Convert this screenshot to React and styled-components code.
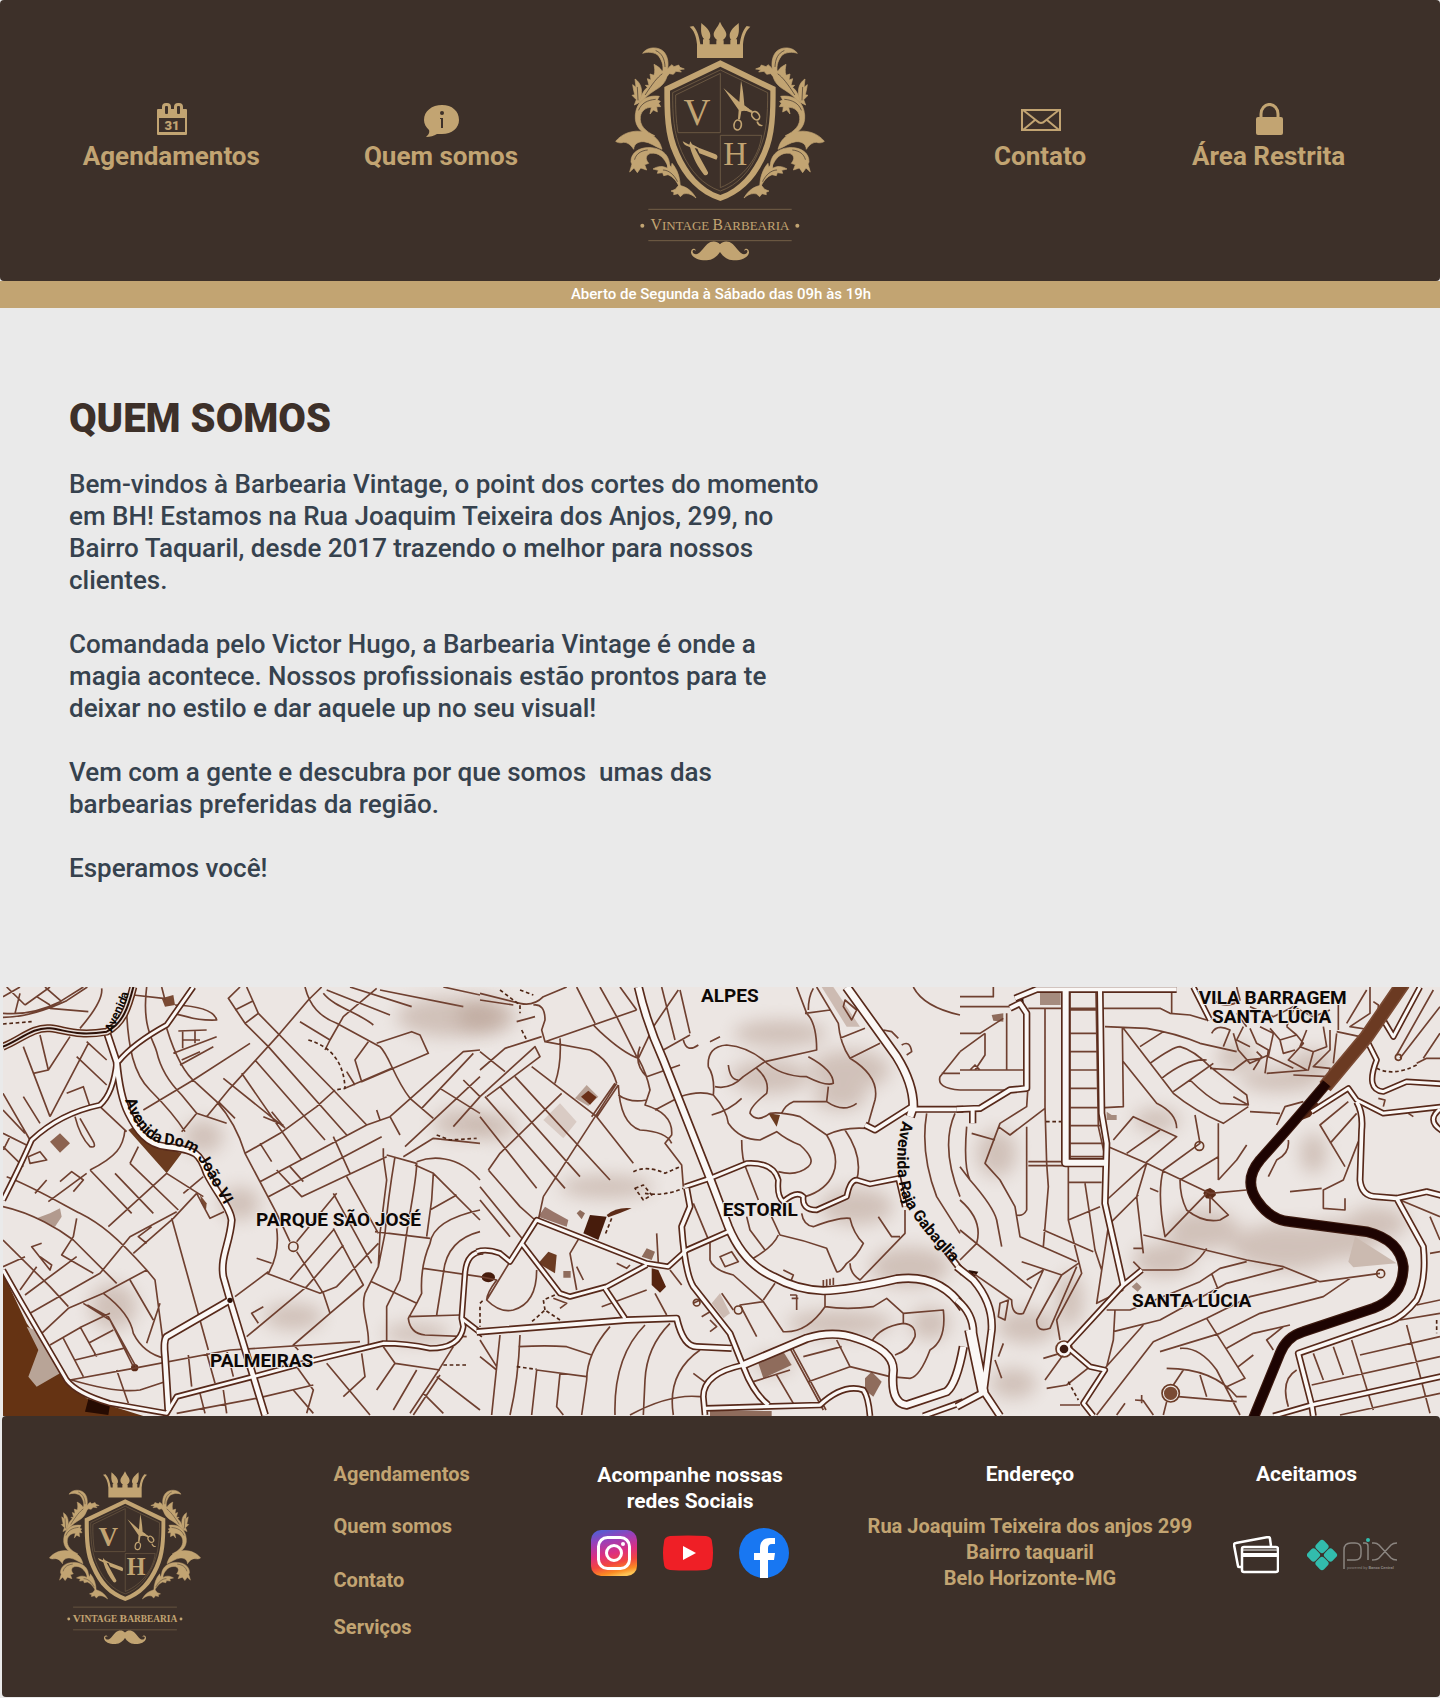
import React from 'react';
import styled, { createGlobalStyle } from 'styled-components';

const coffee = '#3d3029';
const gold = '#c2a472';

const GlobalStyle = createGlobalStyle`
  *, *::before, *::after { box-sizing: border-box; }
  body {
    margin: 0;
    background: #eaeaea;
    color: #36424e;
    font-family: Roboto, "Liberation Sans", sans-serif;
  }
  h1, h2, p, ul, address { margin: 0; padding: 0; }
  a { color: inherit; text-decoration: none; }
  svg { display: block; }
`;

const Header = styled.header`
  display: grid;
  grid-template-columns: 1fr auto 1fr;
  align-items: center;
  padding: 20px 0 18px;
  background: ${coffee};
  border-radius: 4px;
`;

const NavGroup = styled.nav`
  display: flex;
  justify-content: ${(p) => p.$justify};
  gap: ${(p) => p.$gap}px;
  padding: 0 ${(p) => p.$right}px 10px ${(p) => p.$left}px;
`;

const NavLink = styled.a`
  display: flex;
  flex-direction: column;
  align-items: center;
  gap: 4px;
  color: ${gold};
  font-size: 26px;
  font-weight: 700;
  line-height: 30px;
  white-space: nowrap;
`;

const NavIcon = styled.span`
  display: flex;
  align-items: center;
  height: 34px;
  padding-left: 2px;
`;

const HoursBar = styled.p`
  padding-left: 2px;
  background: ${gold};
  color: #fff;
  font-size: 15px;
  font-weight: 500;
  line-height: 27px;
  text-align: center;
`;

const About = styled.main`
  padding: 87px 69px 103px;
`;

const AboutTitle = styled.h1`
  color: ${coffee};
  font-size: 40px;
  font-weight: 900;
  line-height: 48px;
`;

const AboutText = styled.div`
  display: flex;
  flex-direction: column;
  gap: 32px;
  max-width: 756px;
  margin-top: 25px;
  font-size: 26px;
  font-weight: 500;
  line-height: 32px;
  white-space: pre-wrap;
`;

const MapFrame = styled.section`
  margin-left: 3px;
  background: #ece6e3;

  svg { width: 100%; height: 429px; }
`;

const Footer = styled.footer`
  display: grid;
  grid-template-columns: 286fr 258fr 277fr 366fr 164fr;
  align-items: start;
  margin: 0 0 1px 2px;
  padding: 46px 41px 51px 46px;
  background: ${coffee};
  border-radius: 4px;
  color: ${gold};
  font-size: 20px;
  font-weight: 700;
  line-height: 24px;
`;

const FooterLogo = styled.div`
  padding-top: 8px;
`;

const FooterLinks = styled.nav`
  display: grid;
  grid-template-rows: 52px 54px 47px 24px;
  justify-items: start;
`;

const FooterColumn = styled.section`
  display: flex;
  flex-direction: column;
  align-items: center;
  gap: ${(p) => p.$gap}px;
  width: max-content;
`;

const PaymentColumn = styled(FooterColumn)`
  align-items: flex-start;

  h2 { padding-left: 23px; }
`;

const FooterTitle = styled.h2`
  color: #fff;
  font-size: 21px;
  line-height: ${(p) => p.$line || 24}px;
  text-align: center;
`;

const IconRow = styled.div`
  display: flex;
  align-items: center;
  gap: ${(p) => p.$gap}px;
`;

const Address = styled.address`
  font-style: normal;
  line-height: 26px;
  text-align: center;
`;

const leaves = [
  'M128 160 C140 140 176 138 192 156 C205 172 206 192 202 212 L188 216 C192 195 184 176 172 164 C160 156 142 155 128 160Z',
  'M199 216 C202 205 208 200 216 194 L222 200 L236 195 L240 202 L253 207 L238 209 L244 216 L228 214 L220 223 L208 221 C200 232 190 238 184 246Z',
  'M162 193 C176 200 182 206 186 214 L203 208 C204 236 192 256 166 270 C146 282 134 296 117 309 C122 288 130 272 142 262 L136 256 L147 256 L142 236 L153 240 L150 222 L162 226 C166 214 164 204 162 193Z',
  'M105 237 C122 248 128 268 123 290 L116 309 L103 315 L109 299 L96 286 L104 284 L100 266 L98 254 L108 262Z',
  'M178 289 C140 284 110 302 106 345 C103 382 128 406 164 407 C136 394 118 376 121 350 C124 332 138 322 154 322 L150 342 L160 330 L172 336 L170 320 L182 320 L176 310 L181 304 L172 300Z',
  'M47 424 C66 400 100 388 132 396 C166 404 180 424 186 448 C166 440 150 427 132 425 C114 424 102 432 101 448 C92 434 80 424 66 428 C58 429 53 428 47 424Z',
  'M209 502 C211 470 190 446 155 443 C118 440 92 458 93 486 L96 492 L89 516 L102 504 L112 518 L122 504 L140 510 L134 494 L146 490 C134 476 138 464 152 460 C176 456 194 474 204 500Z',
  'M241 562 C240 532 232 508 216 490 L214 502 L203 489 L202 505 C188 497 174 498 159 507 L175 511 L172 520 L188 518 L191 527 L204 524 C220 530 232 546 238 562Z',
  'M288 594 C276 572 256 558 236 556 L226 568 L213 573 L222 577 L221 584 L234 581 L241 590 L250 582 C264 578 276 584 288 594Z',
];
const leafVeins =
  'M168 152 C186 160 194 176 195 200 M186 222 C172 232 158 250 136 284 M112 262 L114 300 M116 330 C124 310 142 300 166 298 M104 478 C108 462 122 452 142 450 M190 510 C206 510 222 524 232 544';

function Foliage() {
  return (
    <>
      {leaves.map((d) => (
        <path key={d} d={d} fill={gold} stroke={gold} strokeWidth="2" strokeLinejoin="round" />
      ))}
      <path d={leafVeins} fill="none" stroke={coffee} strokeWidth="2" strokeLinecap="round" />
    </>
  );
}

function Crest({ width, height }) {
  return (
    <svg width={width} height={height} viewBox="45 60 630 729" role="img" aria-label="Vintage Barbearia">
      <path
        fill={gold}
        d="M291 174 V133 C289 108 281 90 269 80 L280 78 C294 94 298 114 301 133 H309 V118 H313 C301 106 303 88 304 69 C316 80 332 92 331 108 C331 114 328 118 326 119 H329 V133 H349 V121 H352 C344 115 341 110 341 103 C341 92 352 84 360 65 C368 84 379 92 379 103 C379 110 376 115 368 121 H371 V133 H391 V119 H394 C392 118 389 114 389 108 C388 92 404 80 416 69 C417 88 419 106 407 118 H411 V133 H419 C422 114 426 94 440 78 L451 80 C439 90 431 108 429 133 V174Z"
      />
      <Foliage />
      <g transform="translate(720 0) scale(-1 1)">
        <Foliage />
      </g>
      <path
        fill={gold}
        fillRule="evenodd"
        d="M361 181 L527 261 C527 340 527 405 500 465 C470 535 425 582 361 603 C297 582 250 535 221 465 C193 405 193 340 193 261Z M361 200 L210 272 C210 340 211 398 238 458 C264 518 303 565 361 585 C418 565 457 518 484 458 C510 398 511 340 511 272Z"
      />
      <g fill="none" stroke={gold} strokeWidth="2.5" opacity="0.4">
        <path d="M361 210 L218 278 C218 345 220 398 245 455 C270 512 308 555 361 573 C414 555 451 512 476 455 C501 398 503 345 503 278Z" />
        <path d="M361 220 V398 H234 C228 362 226 325 227 285Z" />
        <path d="M361 406 H485 C478 470 430 535 361 563Z" />
        <path d="M145 628 H575 M145 722 H575" strokeWidth="3" />
      </g>
      <g fill={gold} fontFamily='"Liberation Serif", serif'>
        <text x="291" y="375" fontSize="112" textAnchor="middle">V</text>
        <text x="406" y="496" fontSize="100" textAnchor="middle">H</text>
        <text x="360" y="690" fontSize="47" textAnchor="middle">
          V<tspan fontSize="39">INTAGE </tspan>B<tspan fontSize="39">ARBEARIA</tspan>
        </text>
      </g>
      <g fill={gold}>
        <path d="M370 264 L418 306 L423 242 C429 265 431 290 433 316 L447 326 C444 332 438 334 433 332 L424 334 L420 358 L414 357 L416 330Z" />
        <path d="M436 320 L458 333 L455 339 L432 330Z M474 364 C478 374 484 376 489 374 L486 379 C478 380 472 374 469 365Z" />
        <path d="M248 424 L268 434 L271 424 L276 433 L298 444 L345 462 C354 466 354 472 349 479 L298 460 L292 446 L284 444 L324 517 C326 524 318 528 312 524 C294 502 280 476 270 442 C262 436 254 440 248 424Z" />
        <circle cx="127" cy="677" r="6" />
        <circle cx="592" cy="677" r="6" />
        <path d="M360 733 C350 722 334 722 322 732 C306 748 296 768 282 761 C274 756 278 746 288 752 C284 741 272 746 273 758 C276 774 298 782 320 781 C340 780 352 768 360 756 C368 768 380 780 400 781 C422 782 444 774 447 758 C448 746 436 741 432 752 C442 746 446 756 438 761 C424 768 414 748 398 732 C386 722 370 722 360 733Z" />
      </g>
      <g fill="none" stroke={gold} strokeWidth="5">
        <ellipse cx="413" cy="375" rx="11" ry="15" transform="rotate(10 413 375)" />
        <ellipse cx="467" cy="347" rx="14" ry="10" transform="rotate(50 467 347)" />
      </g>
    </svg>
  );
}

const CalendarIcon = () => (
  <svg width="32" height="34" viewBox="0 0 32 34" aria-hidden="true">
    <path fill={gold} fillRule="evenodd" d="M2 6 H30 Q31 6 31 7 V31 Q31 32 30 32 H2 Q1 32 1 31 V7 Q1 6 2 6Z M3 15 V29 H29 V15Z" />
    <rect x="6" y="0" width="9" height="13" rx="4" fill={gold} />
    <rect x="18" y="0" width="9" height="13" rx="4" fill={gold} />
    <rect x="9" y="3" width="3" height="8" rx="1" fill={coffee} />
    <rect x="21" y="3" width="3" height="8" rx="1" fill={coffee} />
    <text x="16" y="27" textAnchor="middle" fill={gold} fontFamily="Roboto, sans-serif" fontWeight="900" fontSize="13">31</text>
  </svg>
);

const InfoIcon = () => (
  <svg width="36" height="34" viewBox="0 0 36 34" aria-hidden="true">
    <path fill={gold} d="M18 2 C28 2 35 8 35 17 C35 25 28 31 18 31 L13 31 C10 33 6 34 2 34 C4 32 6 30 5 27 C2 24 0 21 0 17 C0 8 8 2 18 2Z" />
    <circle cx="18" cy="10" r="2" fill={coffee} />
    <path fill={coffee} d="M16 15 H19 V25 H17 V16 H16Z" />
  </svg>
);

const MailIcon = () => (
  <svg width="40" height="22" viewBox="0 0 40 22" fill="none" stroke={gold} strokeWidth="2" aria-hidden="true">
    <rect x="1" y="1" width="38" height="20" />
    <path d="M2 1 L16 12 Q20 16 24 12 L38 1 M2 21 L14 11 M38 21 L26 11" />
  </svg>
);

const LockIcon = () => (
  <svg width="27" height="34" viewBox="0 0 27 34" aria-hidden="true">
    <rect y="14" width="27" height="18" rx="2" fill={gold} />
    <path d="M5 15 V11 A8 9 0 0 1 22 11 V15" fill="none" stroke={gold} strokeWidth="3" />
  </svg>
);

const InstagramIcon = () => (
  <svg width="46" height="46" viewBox="0 0 46 46" aria-hidden="true">
    <defs>
      <linearGradient id="ig" x1="0.35" y1="0" x2="0.6" y2="1">
        <stop offset="0" stopColor="#5a5bd0" />
        <stop offset="0.22" stopColor="#9b3fb8" />
        <stop offset="0.5" stopColor="#dd2f80" />
        <stop offset="0.72" stopColor="#f2473f" />
        <stop offset="0.9" stopColor="#fb8b23" />
        <stop offset="1" stopColor="#fdc355" />
      </linearGradient>
    </defs>
    <rect width="46" height="46" rx="10" fill="url(#ig)" />
    <g fill="none" stroke="#fff" strokeWidth="3">
      <rect x="7.500" y="7.500" width="31" height="31" rx="9" />
      <circle cx="23" cy="23" r="7.500" />
    </g>
    <circle cx="32" cy="14" r="2" fill="#fff" />
  </svg>
);

const YoutubeIcon = () => (
  <svg width="50" height="36" viewBox="0 0 50 36" aria-hidden="true">
    <path fill="#ef1f26" d="M7 1 Q25 0 43 1 Q49 2 49 7 Q51 18 49 29 Q49 34 43 35 Q25 36 7 35 Q1 34 1 29 Q-1 18 1 7 Q1 2 7 1Z" />
    <path fill="#fff" d="M20 11 L33 18 L20 25Z" />
  </svg>
);

const FacebookIcon = () => (
  <svg width="50" height="50" viewBox="0 0 50 50" aria-hidden="true">
    <circle cx="25" cy="25" r="25" fill="#1877f2" />
    <path fill="#fff" d="M21 50 V32 H15 V25 H21 V20 C21 13 25 10 31 10 L36 10 V16 H33 C30 16 29 18 29 20 V25 H36 L35 32 H29 V50Q25 50.500 21 50Z" />
  </svg>
);

const CardsIcon = () => (
  <svg width="46" height="38" viewBox="0 0 46 38" fill="none" stroke="#fff" strokeWidth="2.500" strokeLinejoin="round" role="img" aria-label="Cartões">
    <path d="M9 31 L6 31 Q5 31 5 30 L1 9 Q1 7 3 7 L35 1 Q37 1 37 3 L38 10" />
    <rect x="9" y="11" width="36" height="25" rx="2" />
    <path d="M9 14 H45" strokeWidth="1" />
    <path d="M9 19 H45" strokeWidth="4" />
  </svg>
);

const PixLogo = () => (
  <svg width="92" height="34" viewBox="0 0 92 34" role="img" aria-label="Pix">
    <g fill="#32bcad" transform="translate(15 17) rotate(45)">
      <rect x="-11.500" y="-11.500" width="11" height="11" rx="3" />
      <rect x="0.500" y="-11.500" width="11" height="11" rx="3" />
      <rect x="-11.500" y="0.500" width="11" height="11" rx="3" />
      <rect x="0.500" y="0.500" width="11" height="11" rx="3" />
    </g>
    <g fill="none" stroke="#8b8580" strokeWidth="1.500">
      <path d="M37 31 V12 Q37 5 44 5 H48 Q54 5 54 11 V16 Q54 22 48 22 H40" />
      <path d="M56 5 H58 Q61 5 61 8 V22" />
      <path d="M65 5 H67 Q70 5 72 7 L84 20 Q86 22 90 22 M90 5 Q86 5 84 7 L72 20 Q70 22 65 22" />
    </g>
    <circle cx="61" cy="2" r="2" fill="#32bcad" />
    <text x="40" y="31" fill="#8b8580" fontFamily="Roboto, sans-serif" fontSize="4" fontWeight="400">
      powered by <tspan fontWeight="700">Banco Central</tspan>
    </text>
  </svg>
);

/* City map: three sheets side by side, each 1440 units wide. */
const sheets = [
  {
    thin:
      'M9 50 L60 21 M20 21 L75 75 M60 40 L45 100 M75 75 L150 21 M110 50 L150 75 M135 21 L185 65 M9 100 C70 105 130 90 180 65 L250 21 M9 112 C80 112 150 85 200 62 L262 21 M150 85 L265 95 M305 25 C310 60 270 110 240 145 M400 45 L490 55 M485 21 L495 60' +
      'M380 100 C385 200 400 280 450 330 C480 360 520 400 555 455 M440 21 C425 140 460 180 470 215 C480 260 500 300 545 345 L590 400 L680 430 M500 145 C520 210 550 280 590 310 L650 365 C690 410 720 470 735 520 L830 700' +
      'M525 75 Q640 80 650 120 Q600 122 560 110 L520 100 M535 153 L620 150 M548 153 V205 M548 180 H600 M585 150 V190 M520 220 L650 170 M540 255 L640 200 M545 240 L600 215 M430 390 L580 300 L750 190 M620 410 L690 325 L840 160 L925 60 L965 21' +
      'M720 21 L685 55 L735 130 L775 100 L740 21 M705 90 L760 62 M775 100 L1000 330 L1100 435 M735 130 L805 200 L1040 465 M765 240 L975 480 M725 280 L905 540 M670 295 L850 440 M655 365 L705 415 M790 410 L850 435 M815 395 L855 445' +
      'M915 21 C930 80 960 110 1010 130 L1140 200 C1170 230 1180 290 1230 355 L1300 415 M970 40 C1000 80 1080 100 1120 135 M980 30 L1170 105 M1050 21 L1235 80 M1140 30 L1390 80 M1330 21 L1440 45 M900 125 L990 180 L1030 110 L1130 25 M990 180 L975 210' +
      'M1130 190 L1235 155 L1260 165 L1285 220 L1085 305 L1065 240 L1105 185 M1040 275 L1065 315 M1035 325 L1175 265 M735 520 L840 460 L950 380 L1005 330 M780 605 L1100 435 L1170 410 L1390 215 L1440 210 M805 650 L1145 470 M780 490 L815 545' +
      'M830 570 L905 650 L1160 530 M870 560 L910 605 M1000 470 L1050 580 M1130 390 L1140 420 M1170 410 L1200 465 M1215 500 L1440 290 M1265 385 L1420 220 M1320 325 L1440 400 M1390 300 L1440 350 M1360 440 L1440 350' +
      'M1150 505 V530 L1160 600 L1140 760 L1135 860 L1095 940 C1080 990 1110 1040 1105 1095 M1185 530 C1170 620 1160 700 1155 760 L1135 860 M1160 525 L1250 550 C1250 600 1230 690 1220 760 L1200 900 L1160 980 V1090 M1210 530 L1300 475 L1440 490 M1250 545 C1290 530 1370 520 1440 600' +
      'M1245 555 L1300 580 L1295 660 L1280 770 M1300 580 L1440 720 M1290 690 L1370 645 M1440 690 Q1300 720 1290 790 Q1260 860 1265 940 L1250 970 L1225 1015 Q1230 1060 1275 1065 L1400 1070 M1440 755 Q1340 780 1330 880 L1310 1005 M1125 755 L1290 775 M1270 865 L1440 890 M1115 905 L1250 970 M1225 1010 L1380 1005' +
      'M1000 640 L1115 850 M1040 590 L1135 760 M830 745 Q840 820 805 880 M870 785 L830 700 M890 785 L1010 640 M890 815 L970 940 L990 1000 M800 880 L960 940 L1010 920 L1135 790 M870 900 L1000 750 M920 920 L1030 795 M1000 745 L1090 915 L990 1000 L880 1095 L895 1110' +
      'M805 875 L705 950 M740 1070 L920 920 M690 1110 L1080 1085 M790 980 L755 1000 L775 1030 M770 835 L815 850 M300 380 L380 455 M270 570 C350 530 370 500 375 450 M390 550 L415 500 M270 570 L395 700 M345 580 L460 700 M390 550 L535 690 M500 580 L610 650 M500 580 L325 740 M610 590 L550 640 M672 695 L630 715 L590 640' +
      'M545 455 L590 400 M20 590 C100 620 200 680 240 700 C300 730 350 770 440 870 L465 900 L495 1130 M9 680 C100 700 180 750 220 780 L350 910 M230 715 L220 770 L185 825 L280 880 M9 780 L150 920 L205 980 M9 860 L75 830 M75 945 L230 830 M60 930 L110 860 M90 1000 L300 880 L390 770 L530 695 M125 1060 L205 985 L310 940 L440 870' +
      'M400 820 L520 715 L590 640 M515 715 L625 1110 M390 900 L460 1020 M440 1090 L480 970 M150 1095 L245 1040 L330 1000 M190 1075 L250 1190 M240 1040 L290 1130 M225 1140 L370 1105 M265 1090 L340 1050 M210 1200 L400 1165 L690 1110 M250 970 L330 1020 L400 1160 M262 975 L325 1010 L408 1160 M310 940 Q390 1000 400 1060 Q430 1120 495 1135' +
      'M350 1170 L385 1270 M215 1200 Q350 1240 420 1230 L495 1205 M565 1125 L575 1220 M620 1120 L645 1210 M680 1110 L700 1190 M600 1240 L615 1300 M670 1230 L680 1300 M530 1300 L770 1255 L940 1215 M890 1160 L940 1230 L920 1300 M980 1150 L1110 1305 M880 1230 L940 1300 M1085 1120 L1095 1190 L1030 1250 M1150 1100 L1185 1150 L1130 1230 M1185 1150 L1320 1170 M1230 1300 L1310 1180 L1360 1100 M1240 1305 L1320 1185 M1250 1170 L1180 1290 M1270 1240 L1330 1300 M1310 1190 L1440 1290' +
      'M70 200 L150 410 M9 340 L90 480 M120 165 L145 270 L100 280 M145 270 L210 170 M150 410 L265 190 M230 230 L320 315 M260 185 L320 240 M200 340 L250 320 L270 380 M70 350 L120 430 M9 390 L75 460 M9 460 L90 500 M30 470 L10 510 M9 500 L70 560 M225 410 Q240 470 270 500 Q290 505 280 485 L240 415 M140 600 L105 640 M145 665 L260 580 M180 605 L215 575 L250 600 L220 635 M125 790 L95 800 L150 870 L155 855 L120 830 M455 740 L415 770 L440 790 M85 530 L120 515 L140 540 L90 550Z',
    dash: 'M925 180 Q1030 210 1035 325 L1005 330 M1310 465 L1350 480 L1430 475 M9 132 L95 125 M1440 980 V1040 M1330 1155 L1400 1155',
    roads: [
      ['M350 245 Q340 340 300 375 Q180 400 95 480 Q60 560 9 660', 9],
      ['M355 245 Q400 190 500 135 L580 21', 9],
      ['M320 155 L350 245 C355 300 365 360 385 400 C410 450 440 495 500 500 C590 510 600 520 620 580 C650 640 690 680 695 720 C690 790 660 830 670 890 L690 960 L760 1190 L795 1305', 14],
      ['M690 960 L500 1070 Q490 1080 495 1130 L505 1290', 14],
      ['M9 870 L60 960 L200 1200 Q230 1240 330 1270 L500 1300 L530 1250 L760 1190 L945 1140 L1150 1090 Q1220 1090 1290 1105 Q1380 1105 1390 1040 L1385 1015 L1395 880 Q1400 815 1450 815 M1385 1015 L1450 1065', 9],
    ],
    dark: [['M9 200 C60 180 100 140 150 145 C200 150 230 170 320 155 C370 130 385 80 400 21', 6]],
    blots: [
      ['M9 880 L80 1030 L200 1200 L260 1255 L430 1308 H9Z', '#653313'],
      ['M80 1040 L105 1050 L180 1180 L110 1220 L85 1190 L115 1110Z', '#b8a497'],
      ['M265 1258 L330 1275 L325 1305 L255 1295Z', '#260b02'],
      ['M385 450 L410 435 L470 495 L545 520 L500 580Z', '#6b3b1f'],
      ['M150 485 L180 460 L210 490 L180 518Z', '#8c6350'],
      ['M485 55 L520 45 L525 75 L495 80Z', '#7a4a33'],
      ['M110 715 L150 700 L180 685 L185 710 L165 740Z', '#b29a8e'],
      ['M600 645 L620 670 L618 690 L605 670Z', '#7a4a33'],
      ['M393 1163 a11 11 0 1 0 22 0 a11 11 0 1 0 -22 0', '#5c2b17'],
    ],
    shade: [[1350, 110, 160, 60], [1410, 100, 60, 30], [1380, 430, 80, 45], [610, 470, 60, 50], [720, 670, 60, 50], [340, 980, 70, 70], [880, 1010, 90, 40], [1250, 1060, 100, 30]],
    rings: [[880, 800, 14]],
  },
  {
    thin:
      'M0 40 Q80 60 120 70 Q160 80 190 50 L260 21 M0 60 L100 75 M160 75 Q195 70 195 120 L185 150 L195 185 L470 90 M110 125 L165 110 M290 21 L345 130 M360 21 L410 110 L470 230 M420 21 L470 90 M340 135 L360 155 Q430 220 475 235 L520 140 L595 30' +
      'M0 270 L75 205 L185 170 M0 350 L165 200 L180 230 L20 350 M0 215 L75 275 M195 185 L330 210 Q390 240 410 310 M240 175 Q245 250 225 310 M25 570 L60 520 L245 340 M25 570 L120 680 L165 720 M155 260 L350 410 L460 550 M105 290 L390 600 M60 320 L300 590 M15 350 L255 625 M0 410 L170 625 M190 650 L410 310 M335 410 L405 310 M350 412 L415 315 M175 720 L190 650' +
      'M415 315 Q420 430 480 450 Q560 455 575 490 M415 345 Q450 370 500 360 M475 235 Q500 280 510 330 L495 375 Q580 400 575 465 L555 490 L605 555 L610 620 M500 290 L600 255 M525 390 L600 350 Q660 330 700 345 M550 210 L630 165 M610 180 Q620 220 655 195 M545 21 L585 180 M600 30 L630 160 M690 185 L720 170 M480 200 Q460 250 500 290' +
      'M700 345 Q705 290 685 260 Q680 200 740 195 Q800 200 850 240 Q900 290 980 290 Q1040 320 1060 310 Q1060 270 985 230 M705 320 Q750 330 790 290 L855 245 L1010 210 Q1010 130 980 100 L950 21 M745 255 Q750 300 775 300 M830 265 Q870 300 860 340 Q810 380 810 400 Q830 430 870 400 Q900 395 960 410 L1040 465 Q1080 530 1060 580 Q1040 630 975 650' +
      'M700 345 Q740 390 745 430 Q780 480 840 480 L890 455 Q920 480 960 495 Q1010 540 985 560 Q950 590 895 575 M695 405 Q750 390 785 355 M1045 320 L1040 365 H940 Q915 375 905 400 M1040 365 Q1090 400 1130 370 M785 480 Q785 540 800 570 L835 660 M1040 465 Q1090 440 1160 445 M1095 450 Q1150 530 1130 600' +
      'M1010 21 L1075 130 Q1080 190 1110 235 Q1200 290 1185 360 L1165 430 M975 100 L1050 90 M1080 175 L1155 145 M1110 235 L1200 190 M985 90 Q985 50 1000 25 M1300 21 Q1330 80 1440 105 M1440 215 L1380 290 Q1370 325 1440 330 M1385 280 H1440 M1340 400 Q1320 520 1370 650 L1440 760 M1425 400 Q1380 500 1440 650 M1095 60 L1130 90 L1115 120 L1090 80Z M1210 150 L1235 155 L1255 175 M1265 195 Q1290 180 1295 215 L1280 225' +
      'M965 700 Q970 735 1000 740 Q1080 710 1110 715 Q1120 760 1150 790 Q1130 830 1100 850 Q1080 880 1070 875 Q1050 830 1040 805 Q970 780 900 765 L870 700 M1195 710 L1235 770 H1260 M1275 690 V760 L1140 900 Q1110 880 1110 850 M800 710 L810 750 L855 810 M895 765 Q880 800 820 835 M640 670 L690 790 V840 Q700 870 760 885 L850 965 L910 1055 Q980 1060 1035 980 V945 M850 965 L780 975 L830 1070 M885 910 L850 960 M725 940 L760 990' +
      'M720 830 L755 815 L775 845 L735 860Z M950 945 V990 M935 955 h20 M930 945 h20 M910 870 L940 885 L930 910 M1030 900 v20 M1040 898 v20 M1050 896 v20 M1060 893 v22 M1035 980 Q1100 990 1180 980 L1220 955 L1270 1000 L1390 990 Q1400 1080 1350 1110 Q1320 1190 1290 1195 L1230 1190 M1270 1000 V1030 Q1310 1035 1305 1070 Q1290 1110 1245 1125 M1175 1085 Q1200 1040 1270 1030' +
      'M1070 1080 L1110 1160 L1230 1190 M1110 1160 L985 1205 M970 1130 L1085 1100 M930 1105 L1030 1290 M938 1105 L1038 1290 M890 1185 L940 1270 M820 1205 L930 1170 M640 1180 L680 1210 M640 970 L660 960 M665 1010 L690 995 M690 1055 L710 1040 L690 1020' +
      'M120 1065 Q115 1200 90 1305 M60 1065 L35 1305 M0 1080 L50 1160 M0 1130 L50 1170 M115 1100 Q200 1095 260 1100 L335 1125 M170 1170 L320 1190 M170 1170 L155 1305 M240 1180 L230 1280 L250 1305 M390 1040 Q320 1120 320 1200 L305 1305 M495 1035 Q400 1130 405 1305 M570 1030 Q500 1100 495 1200 L490 1305 M660 1110 Q560 1180 580 1305 M450 1305 Q570 1240 660 1250' +
      'M530 760 L535 850 M300 770 L270 820 L290 930 M290 860 L310 900 M0 890 L50 900 Q20 940 20 960 Q60 1000 100 990 Q170 970 170 870 M90 845 L20 960 M365 980 L500 930 M525 940 L560 1005 M570 870 L605 915 M0 620 L130 780 M0 660 L90 770 M410 850 L440 865 L450 855 M240 985 L260 970 L220 955',
    dash: 'M60 30 L120 75 L120 100 M120 30 L160 45 M125 150 L140 180 M460 575 Q500 555 555 580 L600 560 M495 640 Q550 650 610 625 M110 1160 L170 1168 M240 1020 L195 990 L150 1030 M195 990 L190 960 L225 945 M465 625 L490 615 L515 645 L490 660Z M395 715 L375 765 M0 970 L10 960',
    roads: [
      ['M615 620 L690 595 L800 550 Q880 545 895 600 Q890 650 910 665 Q950 630 970 650 Q965 690 1010 690 L1100 650 Q1110 600 1130 600 L1170 612 L1255 595 L1275 680', 9],
      ['M620 625 L630 680 L605 740 Q615 880 640 920 L750 1060 L790 1160 Q820 1240 865 1275', 11],
      ['M745 755 L620 810 L565 860 L500 850 L170 720 L90 845 L60 820 Q20 805 -10 815 M125 790 L240 940 L270 950 L380 920 L500 855 M375 925 L435 1015', 9],
      ['M-10 1056 L440 1020 L590 1015 Q610 1100 650 1100 L755 1105', 12],
      ['M790 1155 Q670 1180 670 1250 L675 1305 M675 1285 L1020 1275 Q1090 1210 1150 1230 Q1165 1250 1170 1308', 10],
      ['M790 1155 L980 1075 Q1060 1050 1130 1075 Q1240 1110 1240 1170 Q1230 1270 1280 1275 L1400 1235 Q1430 1210 1450 1100', 18],
      ['M1330 1308 L1450 1265 M1400 815 L1450 880 M1300 388 H1450 M1295 380 L1185 450 L1155 435', 11],
      ['M475 21 Q500 130 550 240 L690 595 L745 740 Q790 850 880 890 Q950 930 1030 932 Q1110 930 1250 897 Q1380 880 1450 985', 18],
      ['M1100 21 L1250 230 Q1300 310 1300 380 L1290 410', 20],
    ],
    dark: [],
    blots: [
      ['M865 400 L900 405 L890 440Z', '#6b3b1f'],
      ['M285 355 L320 315 L355 350 L325 378Z', '#b8a195'],
      ['M303 350 L325 332 L350 352 L330 374Z', '#6b3018'],
      ['M175 710 L195 680 L220 695 L265 720 L260 740Z', '#99766a'],
      ['M310 760 L330 705 L380 710 L355 780Z', '#471c0c'],
      ['M380 705 Q410 680 455 685 Q420 700 385 712Z', '#5c2b17'],
      ['M175 850 L205 815 L230 825 L225 880Z', '#6b3b22'],
      ['M515 865 L535 870 L558 920 L540 938 L515 915Z', '#56240f'],
      ['M5 892 a20 15 0 1 0 40 0 a20 15 0 1 0 -40 0', '#471c0c'],
      ['M835 1150 L910 1115 L935 1155 L850 1195Z', '#8f6c5c'],
      ['M690 1293 H875 V1308 H690Z', '#8f6c5c'],
      ['M1155 1195 L1175 1175 L1205 1205 L1180 1250 L1155 1230Z', '#8f6c5c'],
      ['M1025 21 L1060 21 L1140 140 L1100 140Z', '#cdbbb2'],
      ['M290 700 L300 690 L315 700 L305 718Z M250 873 H272 V893 H250Z M485 830 L500 805 L525 815 L515 840Z', '#8f6c5c'],
      ['M190 420 L240 370 L290 425 L250 475Z', '#d9cbc4'],
      ['M695 970 L720 940 L750 1000 L730 1015Z', '#cdbbb2'],
    ],
    shade: [[20, 110, 90, 50], [900, 160, 140, 40], [870, 290, 120, 50], [1110, 270, 120, 60], [1080, 350, 80, 40], [380, 620, 140, 35], [1130, 680, 110, 55], [1290, 860, 120, 60], [1080, 1030, 160, 40], [40, 440, 70, 40], [1350, 1030, 60, 50], [880, 1150, 60, 30]],
    rings: [[775, 990, 12], [650, 968, 10]],
  },
  {
    thin:
      'M0 50 L100 50 V21 M0 80 H155 M140 100 V270 M0 160 H60 L130 115 M75 160 V225 L45 270 M0 215 L75 160 M0 270 H190 M0 330 H150 M30 270 L45 255 L60 270 M205 85 H600 L630 100 L690 105 L740 120 M635 30 V100 M255 85 V380 L260 550 L265 620 L250 800 M330 90 H410 M330 160 H410 M330 215 H410 M330 270 H410 M330 325 H410 M330 383 H415 M330 437 H420 M330 490 H430 M330 35 V540 M408 35 L415 440 L435 530 H330' +
      'M435 140 L560 145 Q650 160 720 190 L830 215 M487 145 L490 380 L435 383 M490 145 L640 340 Q700 390 790 430 L865 380 M490 245 L590 370 Q650 400 650 445 M540 200 L610 155 M570 250 Q640 200 660 200 Q700 210 750 260 Q800 300 860 345 L865 375 L820 350 M605 295 Q680 235 740 240 M640 335 L690 300 L760 250 M690 300 Q740 350 780 370 L865 375' +
      'M255 385 L150 465 L115 440 M200 440 V690 Q190 710 170 705 M203 335 L200 380 L120 430 L75 550 L120 600 L165 680 L180 770 L350 845 M20 440 Q10 560 30 600 Q100 680 110 720 L125 800 M0 660 Q70 720 50 790 L0 840 M0 750 L215 925 M35 460 L105 480 M205 545 H320 M205 557 H320 M325 560 V720 L365 880 L290 1020 L300 1080 M325 607 H425 M375 610 L405 810 L425 870 M325 720 L420 680 M250 750 L400 815' +
      'M185 845 L305 885 L355 850 M250 870 L190 1000 Q155 1010 155 960 L40 880 M305 885 L230 1020 Q230 1060 270 1045 L350 860 M445 740 L410 970 L490 930 M440 660 L560 550 L445 500 M460 480 L520 410 L650 470 L555 550 M500 520 L600 450 M455 725 L535 645 M560 550 L530 650 L550 820 M560 550 L750 640 L860 630 M705 405 L720 490 L610 570 Q590 640 615 770 L740 640 M660 600 L775 530 V430' +
      'M775 530 V600 M660 600 Q660 650 680 690 Q730 730 780 720 L805 705 L750 650 V700 M775 600 L830 540 L860 495 M570 625 L595 635 M520 805 H550 M550 765 L860 840 L970 860 L1080 905 L1260 880 M740 805 Q700 870 640 870 L545 870 L520 845 M440 990 H510 L720 905 L780 865 L860 845 M755 880 L775 930 M460 1055 L600 1020 L800 910 L970 865 M410 1305 L580 1085 L740 1015 L870 950 L1070 905 M600 1115 L780 1060 L900 1000 L1090 950 L1170 895' +
      'M740 1015 L855 1195 L800 1220 M465 990 L460 1080 L440 1160 M430 1170 L550 1035 M800 1105 L880 1060 L990 1035 M835 1160 L880 1125 M660 1105 Q720 1100 770 1170 L840 1305 M620 1165 Q760 1165 830 1250 L860 1250 M720 1185 L740 1250 M670 1170 L640 1215 M655 1250 L830 1265 M620 1265 L610 1305 M525 1260 L550 1262 L580 1305 M545 1245 V1270 M260 1225 L320 1215 L390 1160 M255 1200 L320 1110 M250 1135 L300 1120 M300 1275 L360 1275 M470 1305 L495 1270' +
      'M1165 365 L1080 435 L1155 560 M1110 490 L1190 400 M1195 485 L1150 600 L1090 630 V685 L1155 690 V655 M990 635 L1085 625 M985 480 Q990 520 950 540 L925 590 M950 435 L975 380 L1030 365 M870 395 L960 400 M1320 235 L1440 80 M1310 225 L1420 30 M1370 250 L1400 235 H1440 M1390 235 L1440 160 M1230 21 V100 L1170 140 L1235 150 M1240 65 L1255 75 V110 M1130 155 L1200 170 M1135 60 V150 M1160 130 L1220 30' +
      'M1200 1125 L1440 1070 M1055 1215 L1440 1130 M1175 1080 L1240 1290 M1060 1120 L1090 1200 M1120 1100 L1150 1185 M1340 1035 L1410 1300 M1370 975 L1440 960 M1320 1020 L1440 1000 M1140 1305 L1440 1240 M1410 820 L1440 815 M1320 660 L1440 710 M1410 710 L1440 780 M1010 1170 Q960 1200 985 1280 M970 1040 L920 1080 L940 1110 M120 970 L145 960 L135 1020 L115 1010Z M130 1090 L115 1130 M105 1140 L125 1195 M1255 355 L1275 360 L1270 380 M1345 400 L1360 410 M0 560 L30 600 M200 900 L250 870' +
      'M750 265 L820 270 L860 240 L905 235 M755 160 Q770 130 810 150 L790 200 M820 160 L835 210 L870 250 L925 225 M850 140 L830 180 L870 200 M870 145 L890 190 L925 210 L915 280 M900 140 L940 160 L925 230 L1000 265 M930 145 L960 180 L1010 165 L1030 190 L985 240 L1040 270 M960 180 L970 220 L1005 210 M1040 150 L1020 200 L1060 215 L1045 270 L920 280 M1060 215 L1100 200 L1090 140 M1110 150 V210 L1060 260 L1110 265 L1105 290 L1000 285 M980 140 L1010 165 M1130 160 L1120 250 M880 270 L905 230 L890 215 M760 60 Q800 90 840 60 L830 21 M870 80 L940 110 L1000 80 L1060 110 L1110 90 M830 100 L860 140 M1000 90 L980 140',
    dash: 'M258 425 H312 M1250 265 Q1300 290 1370 255 M1430 1020 V1060 M325 1205 L355 1260',
    roads: [
      ['M-10 388 L60 385 L150 330 L200 325 V100 L180 70 L150 85 M165 55 L230 28 H650 M38 388 V430', 12],
      ['M317 30 V548 H440', 18],
      ['M420 30 L425 400 L440 490 L435 670 L490 915', 12],
      ['M490 915 L320 1100 L390 1160 L435 1170 L370 1270 L400 1308 M490 915 L545 870', 9],
      ['M700 21 L750 120 M1270 120 L1300 170 L1380 21 M1225 190 L1250 240 Q1215 330 1270 335 L1340 305 L1450 312', 9],
      ['M1055 395 L1165 325 L1190 360 L1270 400 L1450 380 Q1390 420 1450 455', 9],
      ['M1190 365 Q1210 400 1205 450 L1200 600 Q1205 650 1250 650 L1310 655 L1400 635 L1450 648 M1310 655 L1390 800 Q1400 900 1370 960 Q1330 1010 1290 1025 L1015 1120 L1055 1275 L1060 1308', 11],
      ['M940 1308 L1055 1275 L1450 1188', 10],
      ['M-10 860 L40 900 Q100 970 95 1050 L70 1240 M-10 960 Q40 1000 40 1060 L75 1240 L120 1308 M-10 1280 L65 1240 L25 1050', 15],
    ],
    dark: [],
    blots: [
      ['M240 35 H302 V75 H240Z', '#a58b7e'],
      ['M95 105 L130 100 V125 L100 122Z', '#8f6c5c'],
      ['M165 80 L175 50 L190 55 L192 82Z', '#2b0f06'],
      ['M730 640 L735 630 L750 624 L764 632 L768 645 L755 657 L738 655Z', '#5c2b17'],
      ['M1185 770 L1310 850 L1180 862 L1165 845Z', '#cbbab0'],
      ['M515 920 L530 907 L545 922 L533 935Z M440 395 L455 405 H470 V420 H440Z', '#a58b7e'],
      ['M1000 430 L1060 360 L1080 375 L1050 410Z', '#5c2b17'],
      ['M25 870 L55 875 L45 890 L30 888Z', '#2b0f06'],
      ['M612 1240 a20 20 0 1 0 40 0 a20 20 0 1 0 -40 0', '#7a4a33'],
    ],
    shade: [[960, 300, 120, 35], [730, 750, 110, 60], [980, 800, 170, 70], [1130, 780, 120, 60], [610, 840, 90, 50], [590, 420, 70, 35], [110, 520, 60, 70], [200, 1040, 90, 50], [160, 1210, 70, 45], [1060, 520, 40, 60], [1250, 730, 90, 50], [330, 960, 40, 80], [830, 230, 60, 40], [1060, 250, 70, 40]],
    rings: [[632, 1240, 26], [312, 1107, 24], [1262, 881, 12], [1315, 232, 9], [718, 498, 13]],
  },
];

const mapLabels = [
  [768, 738, 'PARQUE SÃO JOSÉ'],
  [630, 1162, 'PALMEIRAS'],
  [2103, 66, 'ALPES'],
  [2168, 707, 'ESTORIL'],
  [3596, 72, 'VILA BARRAGEM'],
  [3636, 130, 'SANTA LÚCIA'],
  [3396, 980, 'SANTA LÚCIA'],
];

function CityMap() {
  const highway =
    'M1100 310 Q990 440 900 540 Q850 600 890 660 Q930 720 990 725 L1220 755 Q1320 780 1330 860 Q1330 950 1240 985 L1030 1055 Q980 1070 960 1120 L880 1315';
  return (
    <svg viewBox="9 21 4311 1287" preserveAspectRatio="xMidYMid slice" role="img" aria-label="Mapa da região">
      <defs>
        <filter id="soft" x="-40%" y="-40%" width="180%" height="180%">
          <feGaussianBlur stdDeviation="26" />
        </filter>
        <path id="dom-joao" d="M375 360 C400 440 440 486 500 494 C560 500 580 512 600 545 L720 760" />
        <path id="avenida" d="M335 158 L382 58 L392 10" />
        <path id="raja" d="M1268 422 C1240 520 1250 640 1286 688 Q1335 765 1440 870" />
      </defs>
      {sheets.map((sheet, i) => (
        <g key={i} transform={`translate(${i * 1440} 0)`} fill="none" strokeLinejoin="round">
          <g fill="#b39a8c" opacity="0.48" filter="url(#soft)">
            {sheet.shade.map(([cx, cy, rx, ry]) => (
              <ellipse key={`${cx}-${cy}`} cx={cx} cy={cy} rx={rx} ry={ry} />
            ))}
          </g>
          {sheet.blots.map(([d, fill]) => (
            <path key={d} d={d} fill={fill} />
          ))}
          <path d={sheet.thin} stroke="#6f4030" strokeWidth="5" />
          <path d={sheet.dash} stroke="#4f2615" strokeWidth="5" strokeDasharray="11 8" />
          {sheet.rings.map(([cx, cy, r]) => (
            <circle key={`${cx}-${cy}`} cx={cx} cy={cy} r={r} stroke="#6b3b26" strokeWidth="5" />
          ))}
          {sheet.roads.map(([d, w]) => (
            <path key={d} d={d} stroke="#57291a" strokeWidth={w + 10} />
          ))}
          {sheet.roads.map(([d, w]) => (
            <path key={d} d={d} stroke="#fbf8f6" strokeWidth={w} />
          ))}
          {sheet.dark.map(([d, w]) => (
            <g key={d}>
              <path d={d} stroke="#5c2b17" strokeWidth={w + 18} />
              <path d={d} stroke="#e6dcd7" strokeWidth={w + 9} />
              <path d={d} stroke="#2b0f06" strokeWidth={w} />
            </g>
          ))}
        </g>
      ))}
      <g transform="translate(2880 0)" fill="none">
        <path d="M1330 10 L1220 170 L1095 320" stroke="#7a4a33" strokeWidth="44" />
        <path d="M1330 10 L1220 170 L1095 320" stroke="#6b3a22" strokeWidth="34" />
        <path d={highway} stroke="#3c1a10" strokeWidth="32" />
        <path d={highway} stroke="#1d0402" strokeWidth="25" />
        <circle cx="312" cy="1107" r="20" fill="#fbf8f6" />
        <circle cx="312" cy="1107" r="13" fill="#3c1a10" />
      </g>
      <circle cx="690" cy="961" r="8" fill="#2b0f06" />
      <g fill="#0d0806" stroke="#ece6e3" strokeWidth="6" paintOrder="stroke" fontFamily="Roboto, sans-serif" fontWeight="700" fontSize="57">
        {mapLabels.map(([x, y, label]) => (
          <text key={`${x}-${y}`} x={x} y={y}>
            {label}
          </text>
        ))}
      </g>
      <g fill="#0d0806" fontFamily="Roboto, sans-serif" fontWeight="700" fontSize="48">
        <text>
          <textPath href="#dom-joao">Avenida Dom João VI</textPath>
        </text>
        <text fontSize="36">
          <textPath href="#avenida">Avenida</textPath>
        </text>
        <text transform="translate(1440 0)">
          <textPath href="#raja">Avenida Raja Gabaglia</textPath>
        </text>
      </g>
    </svg>
  );
}

function NavItem({ href, icon, children }) {
  return (
    <NavLink href={href}>
      <NavIcon>{icon}</NavIcon>
      {children}
    </NavLink>
  );
}

export default function App() {
  return (
    <>
      <GlobalStyle />
      <Header>
        <NavGroup $justify="flex-end" $gap={104} $left={0} $right={97}>
          <NavItem href="#agendamentos" icon={<CalendarIcon />}>Agendamentos</NavItem>
          <NavItem href="#quem-somos" icon={<InfoIcon />}>Quem somos</NavItem>
        </NavGroup>
        <Crest width={210} height={243} />
        <NavGroup $justify="flex-start" $gap={106} $left={169} $right={0}>
          <NavItem href="#contato" icon={<MailIcon />}>Contato</NavItem>
          <NavItem href="#area-restrita" icon={<LockIcon />}>Área Restrita</NavItem>
        </NavGroup>
      </Header>
      <HoursBar>Aberto de Segunda à Sábado das 09h às 19h</HoursBar>

      <About id="quem-somos">
        <AboutTitle>QUEM SOMOS</AboutTitle>
        <AboutText>
          <p>
            Bem-vindos à Barbearia Vintage, o point dos cortes do momento em BH! Estamos na Rua Joaquim Teixeira dos
            Anjos, 299, no Bairro Taquaril, desde 2017 trazendo o melhor para nossos clientes.
          </p>
          <p>
            Comandada pelo Victor Hugo, a Barbearia Vintage é onde a magia acontece. Nossos profissionais estão prontos
            para te deixar no estilo e dar aquele up no seu visual!
          </p>
          <p>{'Vem com a gente e descubra por que somos  umas das barbearias preferidas da região.'}</p>
          <p>Esperamos você!</p>
        </AboutText>
      </About>

      <MapFrame>
        <CityMap />
      </MapFrame>

      <Footer id="contato">
        <FooterLogo>
          <Crest width={154} height={176} />
        </FooterLogo>
        <FooterLinks>
          <a href="#agendamentos">Agendamentos</a>
          <a href="#quem-somos">Quem somos</a>
          <a href="#contato">Contato</a>
          <a href="#servicos">Serviços</a>
        </FooterLinks>
        <FooterColumn $gap={14}>
          <FooterTitle $line={26}>
            Acompanhe nossas
            <br />
            redes Sociais
          </FooterTitle>
          <IconRow $gap={26}>
            <a href="#instagram" aria-label="Instagram"><InstagramIcon /></a>
            <a href="#youtube" aria-label="YouTube"><YoutubeIcon /></a>
            <a href="#facebook" aria-label="Facebook"><FacebookIcon /></a>
          </IconRow>
        </FooterColumn>
        <FooterColumn $gap={27}>
          <FooterTitle>Endereço</FooterTitle>
          <Address>
            Rua Joaquim Teixeira dos anjos 299
            <br />
            Bairro taquaril
            <br />
            Belo Horizonte-MG
          </Address>
        </FooterColumn>
        <PaymentColumn $gap={50}>
          <FooterTitle>Aceitamos</FooterTitle>
          <IconRow $gap={28}>
            <CardsIcon />
            <PixLogo />
          </IconRow>
        </PaymentColumn>
      </Footer>
    </>
  );
}
